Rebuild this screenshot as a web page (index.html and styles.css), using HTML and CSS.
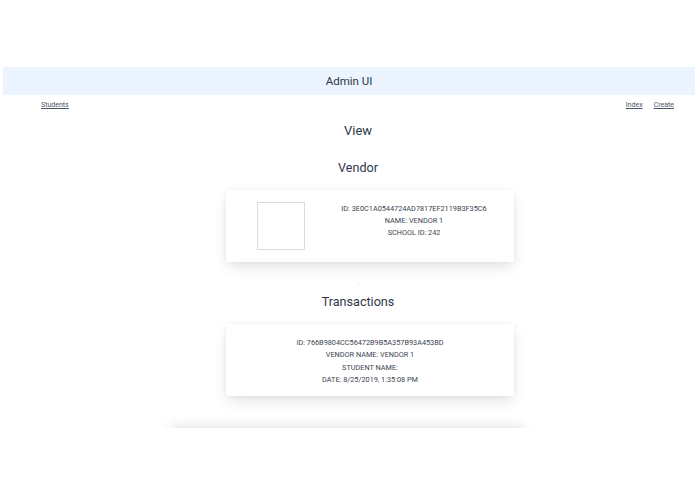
FILE: index.html
```html
<!DOCTYPE html>
<html>
<head>
<meta charset="utf-8">
<link rel="stylesheet" href="styles.css">
</head>
<body>
<div class="viewport">
  <div class="top-space"></div>
  <header class="appbar">Admin UI</header>
  <nav class="nav">
    <a href="#" class="nav-link">Students</a>
    <div class="nav-right">
      <a href="#" class="nav-link">Index</a>
      <a href="#" class="nav-link">Create</a>
    </div>
  </nav>
  <main class="content">
    <h1 class="page-title">View</h1>
    <h2 class="section-title vendor-title">Vendor</h2>
    <section class="card vendor-card">
      <div class="thumb"></div>
      <div class="info">
        <p>ID: 3E0C1A0544724AD7817EF2119B3F35C6</p>
        <p>NAME: VENDOR 1</p>
        <p>SCHOOL ID: 242</p>
      </div>
    </section>
    <div class="dot"></div>
    <h2 class="section-title trans-title">Transactions</h2>
    <section class="card trans-card">
      <div class="info tinfo">
        <p>ID: 766B9804CC56472B9B5A357B93A453BD</p>
        <p>VENDOR NAME: VENDOR 1</p>
        <p>STUDENT NAME:</p>
        <p>DATE: 8/25/2019, 1:35:08 PM</p>
      </div>
    </section>
    <section class="card next-card"></section>
  </main>
</div>
</body>
</html>
```

FILE: styles.css
```css
html, body {
  margin: 0;
  padding: 0;
  background: #ffffff;
}
body {
  font-family: Roboto, "Liberation Sans", sans-serif;
  color: #2d3748;
}
.viewport {
  height: 428px;
  overflow: hidden;
}
.top-space {
  height: 67px;
}
.appbar {
  margin-left: 3px;
  height: 28px;
  background: #ebf4ff;
  display: flex;
  align-items: center;
  justify-content: center;
  font-size: 11.5px;
  color: #2d3748;
}
.nav {
  height: 20px;
  display: flex;
  justify-content: space-between;
  align-items: center;
  padding: 0 21px 0 41px;
}
.nav-right {
  display: flex;
  gap: 11px;
}
.nav-link {
  font-size: 7px;
  color: #4a5568;
  text-decoration: underline;
}
.content {
  display: flex;
  flex-direction: column;
}
.page-title, .section-title {
  margin: 0;
  padding-left: 21px;
  text-align: center;
  line-height: 20px;
  font-weight: 400;
  color: #2d3748;
}
.page-title {
  margin-top: 6px;
  font-size: 13px;
}
.section-title {
  font-size: 12.6px;
}
.vendor-title {
  margin-top: 17px;
}
.card {
  background: #fff;
  box-sizing: border-box;
  box-shadow: 0 6px 14px -2px rgba(0,0,0,0.12), 0 0 6px rgba(0,0,0,0.05);
}
.vendor-card {
  margin: 12px 0 0 226px;
  width: 288px;
  height: 72px;
  display: flex;
  padding: 12px 0 0 31px;
}
.thumb {
  width: 48px;
  height: 48px;
  box-sizing: border-box;
  border: 1px solid #dcdcdc;
  flex: none;
}
.info {
  flex: 1;
  margin-left: 9px;
  padding-top: 1px;
  text-align: center;
  font-size: 7.3px;
  color: #3c4350;
}
.info p {
  margin: 0;
  line-height: 12.2px;
}
.dot {
  width: 1px;
  height: 1px;
  margin: 21px 0 0 358px;
  background: #d8d8d8;
}
.trans-title {
  margin-top: 8px;
}
.trans-card {
  margin: 12px 0 0 226px;
  width: 288px;
  height: 72px;
  padding-top: 13px;
}
.tinfo {
  margin-left: 0;
  padding-top: 0;
}
.tinfo p {
  line-height: 12.4px;
}
.next-card {
  margin: 33px 0 0 170px;
  width: 355px;
  height: 80px;
  box-shadow: 0 -2px 12px rgba(0,0,0,0.12);
}
```
